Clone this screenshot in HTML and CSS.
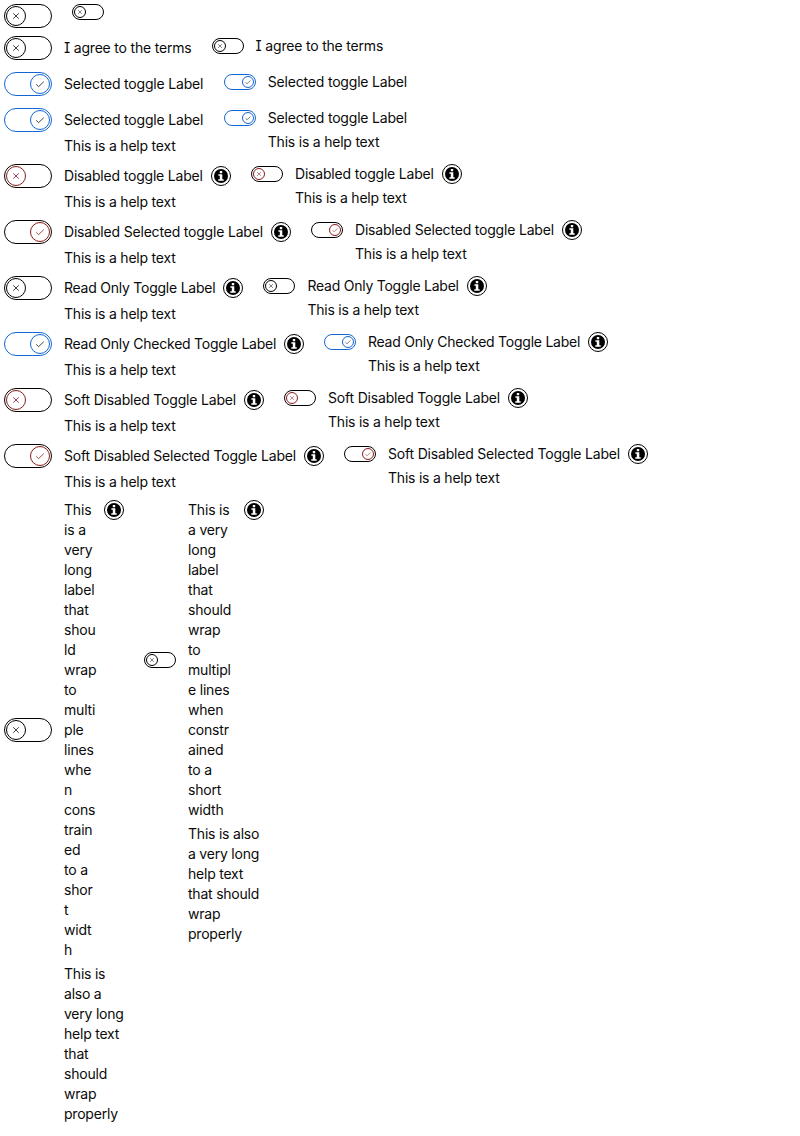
FILE: index.html
```html
<!DOCTYPE html>
<html lang="en">
<head>
<meta charset="utf-8">
<title>Toggles</title>
<link rel="stylesheet" href="styles.css">
</head>
<body>
<main class="list" id="list"></main>
<script src="toggles.js"></script>
</body>
</html>
```
FILE: styles.css
```css
body {
  margin: 0;
  padding: 4px;
  background: #fff;
  color: #0a0a0a;
  font: 14px/20px Inter, "Liberation Sans", sans-serif;
  font-feature-settings: "cv08";
  letter-spacing: -0.19px;
}
.list { display: flex; flex-direction: column; }
.row { display: flex; align-items: flex-start; gap: 20px; }
.row-bare { height: 32px; }
.row-bare .item { grid-template-columns: auto; }
.row-label { height: 36px; }
.row-help { height: 56px; }
.item {
  display: grid;
  grid-template-columns: auto auto;
  gap: 4px 12px;
  align-items: center;
  white-space: nowrap;
}
.toggle {
  box-sizing: border-box;
  display: flex;
  width: 48px;
  height: 24px;
  padding: 1px;
  border: 1px solid #000;
  border-radius: 12px;
}
.thumb {
  box-sizing: border-box;
  display: flex;
  align-items: center;
  justify-content: center;
  width: 20px;
  height: 20px;
  border: 1px solid #000;
  border-radius: 50%;
}
.mark { width: 12px; height: 12px; fill: none; stroke: #111; stroke-width: 0.8; }
.small .toggle { width: 32px; height: 16px; }
.small .thumb { width: 12px; height: 12px; }
.small .mark { width: 8px; height: 8px; }
.on .toggle { justify-content: flex-end; }
.blue .toggle, .blue .thumb { border-color: #1467d3; }
.red .thumb { border-color: #8b1a1a; }
.red .mark { stroke: #8b1a1a; }
.header { display: flex; align-items: flex-start; gap: 8px; }
.info { flex: none; width: 20px; height: 20px; }
.help { grid-column: 2; letter-spacing: -0.22px; }
.tight { letter-spacing: -0.24px; }
.constrained.large .label { width: 32px; }
.constrained.small .label { width: 48px; }
```
FILE: toggles.js
```js
const cross = '<path d="M3.2 3.2 8.8 8.8M8.8 3.2 3.2 8.8"/>';
const check = '<path d="M2.2 6.4 4.6 8.6 9.8 3.7"/>';
const info = '<svg class="info" viewBox="0 0 20 20"><circle cx="10" cy="10" r="9.5" fill="none" stroke="#000"/><circle cx="10" cy="10" r="7"/><path fill="#fff" d="M8.8 4.9h2.4v2.3H8.8zM7.4 8.3h3.9v5h1.4v1.5H7.3v-1.5h1.5V9.8H7.4z"/></svg>';
const help = 'This is a help text';

const rows = [
  { row: 'row-bare' },
  { row: 'row-label', label: 'I agree to the terms', width: 127.6 },
  { row: 'row-label', state: 'on blue', label: 'Selected toggle Label', width: 139.8 },
  { state: 'on blue', label: 'Selected toggle Label', width: 139.8, help },
  { state: 'red', label: 'Disabled toggle Label', width: 139, help, info },
  { state: 'on red', label: 'Disabled Selected toggle Label', width: 199, help, info },
  { state: 'tight', label: 'Read Only Toggle Label', width: 151.4, help, info },
  { state: 'on blue tight', label: 'Read Only Checked Toggle Label', width: 212, help, info },
  { state: 'red', label: 'Soft Disabled Toggle Label', width: 172, help, info },
  { state: 'on red', label: 'Soft Disabled Selected Toggle Label', width: 232, help, info },
  {
    row: 'row-long', state: 'constrained', info,
    labels: {
      large: 'This|is a|very|long|label|that|shou|ld|wrap|to|multi|ple|lines|whe|n|cons|train|ed|to a|shor|t|widt|h',
      small: 'This is|a very|long|label|that|should|wrap|to|multipl|e lines|when|constr|ained|to a|short|width'
    },
    helps: {
      large: 'This is|also a|very long|help text|that|should|wrap|properly',
      small: 'This is also|a very long|help text|that should|wrap|properly'
    }
  }
];

const lines = text => text.split('|').join('<br>');

function item(r, size) {
  const state = r.state || '';
  const label = r.labels ? r.labels[size] : r.label;
  const note = r.helps ? r.helps[size] : r.help;
  const width = r.width ? ` style="width:${r.width}px"` : '';
  const mark = state.includes('on ') ? check : cross;
  return `<div class="item ${size} ${state}">
    <span class="toggle"><span class="thumb"><svg class="mark" viewBox="0 0 12 12">${mark}</svg></span></span>
    ${label ? `<div class="header"><span class="label"${width}>${lines(label)}</span>${r.info || ''}</div>` : ''}
    ${note ? `<div class="help">${lines(note)}</div>` : ''}
  </div>`;
}

document.getElementById('list').innerHTML = rows.map(r =>
  `<div class="row ${r.row || 'row-help'}">${item(r, 'large')}${item(r, 'small')}</div>`).join('');
```
